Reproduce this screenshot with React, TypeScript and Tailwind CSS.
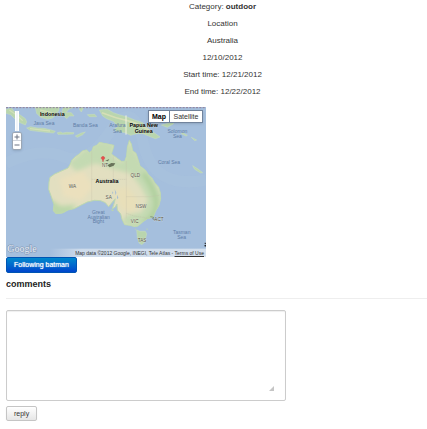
const details = [
  { label: "Category: ", value: "outdoor" },
  { label: "Location" },
  { label: "Australia" },
  { label: "12/10/2012" },
  { label: "Start time: 12/21/2012" },
  { label: "End time: 12/22/2012" },
];

const seas = [
  { x: 132, y: 74, text: "Java Sea" },
  { x: 256, y: 80, text: "Banda Sea" },
  { x: 352, y: 82, text: "Arafura" },
  { x: 352, y: 98, text: "Sea" },
  { x: 532, y: 100, text: "Solomon" },
  { x: 532, y: 115, text: "Sea" },
  { x: 507, y: 191, text: "Coral Sea" },
  { x: 295, y: 342, text: "Great" },
  { x: 296, y: 356, text: "Australian" },
  { x: 295, y: 370, text: "Bight" },
  { x: 545, y: 403, text: "Tasman" },
  { x: 545, y: 418, text: "Sea" },
];

const states = [
  { x: 217, y: 264, text: "WA" },
  { x: 315, y: 200, text: "NT" },
  { x: 406, y: 230, text: "QLD" },
  { x: 326, y: 297, text: "SA" },
  { x: 423, y: 324, text: "NSW" },
  { x: 404, y: 370, text: "VIC" },
  { x: 477, y: 364, text: "ACT" },
  { x: 426, y: 427, text: "TAS" },
];

const countries = [
  { x: 157, y: 47, text: "Indonesia" },
  { x: 431, y: 82, text: "Papua New" },
  { x: 431, y: 98, text: "Guinea" },
  { x: 321, y: 250, text: "Australia" },
];

const mainland =
  "M388 121 L394 132 398 152 408 160 414 178 420 198 436 210 446 225 456 234 464 248 476 262 481 278 482 296 477 316 467 333 459 352 442 356 428 366 414 378 404 380 390 376 374 374 366 358 362 342 352 330 351 312 345 322 337 326 343 308 346 296 334 310 326 320 316 308 302 302 284 301 262 306 242 316 222 326 204 330 188 339 168 341 160 332 162 314 154 290 146 268 147 246 150 232 164 222 182 214 204 204 211 192 216 180 226 170 238 162 248 152 260 150 268 158 276 152 280 140 290 136 298 127 312 130 328 133 342 136 338 150 334 162 348 172 364 184 374 184 380 168 382 142Z";

function MapDrawing() {
  return (
    <svg viewBox="18 21 600 450" className="block h-full w-full" role="img" aria-label="Map of Australia">
      <defs>
        <clipPath id="land">
          <path d={mainland} />
        </clipPath>
        <filter id="soft" x="-20%" y="-20%" width="140%" height="140%">
          <feGaussianBlur stdDeviation="7" />
        </filter>
        <linearGradient id="credit" x1="0" x2="1">
          <stop offset="0" stopColor="#e4ebf3" stopOpacity="0" />
          <stop offset="0.2" stopColor="#e4ebf3" stopOpacity="0.65" />
          <stop offset="1" stopColor="#e4ebf3" stopOpacity="0.75" />
        </linearGradient>
      </defs>
      <rect x="18" y="21" width="600" height="450" fill="#a5bfdd" />
      <path d="M18 190Q120 140 190 170T330 95T430 130T618 240" fill="none" stroke="#afc9e1" strokeWidth="34" opacity=".25" />

      <g fill="#b9d5ae" stroke="#c9dfbc" strokeWidth="1.5">
        <path d="M18 28L34 24 44 36 62 46 76 56 80 66 76 75 60 68 46 58 32 44 18 40Z" />
        <path d="M80 84L92 80 112 84 132 85 150 89 166 94 160 99 138 97 112 94 90 91Z" />
        <path d="M172 98L182 96 188 99 200 97 222 98 220 102 200 103 174 103Z" />
        <path d="M226 108L244 99 256 96 248 104 232 112Z" />
        <path d="M106 21L178 21 176 32 168 42 158 54 142 58 122 52 110 40Z" />
        <path d="M190 22L224 21 206 28 198 38 214 38 222 48 208 48 200 56 192 48 186 35Z" />
        <path d="M240 21L250 24 244 36 238 28ZM262 44L284 43 290 50 268 50Z" />
        <path d="M298 30L322 28 340 38 360 45 382 51 404 60 428 68 442 84 462 98 480 111 466 116 446 108 430 101 410 101 392 106 376 98 350 94 342 88 354 80 340 64 320 56 308 48Z" />
        <path d="M484 75L508 69 520 62 520 72 502 82ZM548 98L562 106 558 108 544 101ZM574 112L590 120 584 122Z" />
        <path d="M578 197L594 207 608 218 602 219 584 208Z" />
        <path d="M410 390L420 394 436 394 440 402 434 426 426 434 418 430 412 412Z" />
        <path d={mainland} fill="#e2dfc0" stroke="#bcd8af" strokeWidth="3" />
      </g>
      <path d="M306 38Q346 54 382 62T458 98" fill="none" stroke="#dde1b8" strokeWidth="5" opacity=".8" />
      <path d="M28 30Q52 45 68 62M120 30L155 38M90 86L150 93" fill="none" stroke="#dce2ba" strokeWidth="4" opacity=".7" />

      <g clipPath="url(#land)">
        <g filter="url(#soft)">
          <path d="M204 190L248 152 300 122 344 132 336 168 366 188 384 120 416 172 462 238 490 290 468 360 408 390 362 368 382 344 424 338 444 300 420 256 390 220 342 208 286 190 230 214Z" fill="#c4dab2" />
          <path d="M150 296L182 318 230 314 206 345 154 350Z" fill="#bcd7a9" />
          <path d="M430 220Q460 260 468 300T432 370" fill="none" stroke="#b0d09e" strokeWidth="16" />
          <path d="M178 236L250 214 280 260 244 302 190 288Z" fill="#ebe0bd" />
          <path d="M344 270L382 260 414 302 398 340 362 326Z" fill="#e8dfb9" />
        </g>
        <path d="M275 145V304M275 238H379M340 166V238M379 184V355M379 290H450L478 286M379 340L402 348 430 352 452 358" fill="none" stroke="#c3c1a9" strokeWidth="1.3" strokeDasharray="4 2" />
        <path d="M344 268l5 10-2 8zM352 284l3 10-4 3zM336 274l4 4-2 5z" fill="#9fbad7" />
      </g>
      <path d="M331 328l12 2-6 4zM405 385l4 4-3 2zM440 384l4 4-4 2z" fill="#b9d5ae" />
      <path d="M378 46V104" stroke="#eff1e2" strokeWidth="3" />
      <path d="M18 23H618" stroke="#907f99" strokeWidth="3" strokeDasharray="6 4" />
      <path d="M316 182l12-5-4 7zM322 196l12-7 12 1-5 7-12 5z" fill="#68735a" />
      <path d="M451 350l10 2-3 5 12 3" fill="none" stroke="#6c7568" strokeWidth="2" />
      <path d="M309 186L307 179Q302 176 304 172Q309 166 314 172Q316 176 311 179Z" fill="#e94d4b" stroke="#b94945" />

      <g textAnchor="middle" fontFamily="Liberation Sans, sans-serif">
        <g fontSize="15" fill="#5f7da6">
          {seas.map((label) => (
            <text key={`${label.x}-${label.y}`} x={label.x} y={label.y}>{label.text}</text>
          ))}
        </g>
        <g fontSize="14" fill="#55554d" stroke="#f1efdf" strokeOpacity=".6" strokeWidth="2" paintOrder="stroke">
          {states.map((label) => (
            <text key={label.text} x={label.x} y={label.y}>{label.text}</text>
          ))}
        </g>
        <g fontSize="16" fontWeight="700" fill="#000" stroke="#e6ecd8" strokeOpacity=".7" strokeWidth="2" paintOrder="stroke">
          {countries.map((label) => (
            <text key={label.text} x={label.x} y={label.y}>{label.text}</text>
          ))}
        </g>
      </g>

      <rect x="150" y="446" width="468" height="25" fill="url(#credit)" />
      <text x="22" y="456" fontSize="30" fontFamily="Liberation Serif, serif" fill="#e9eff6" stroke="#7f95b3" strokeWidth="3" paintOrder="stroke">Google</text>
      <path d="M614 430h4M618 434l-4 4h4" stroke="#222" strokeWidth="3" />
    </svg>
  );
}

function ZoomControl() {
  return (
    <div className="absolute top-1 left-1.5 flex w-2.5 flex-col items-center">
      <div className="mb-px h-5 w-1 border-x border-white bg-slate-100" />
      <div className="flex flex-col rounded-xs border border-[#9ba6b4] bg-white shadow-sm">
        <button type="button" aria-label="Zoom in" className="flex size-2 items-center justify-center border-b border-gray-300 text-gray-500">
          <svg viewBox="0 0 8 8" className="size-2"><path d="M1.5 4h5M4 1.5v5" stroke="currentColor" /></svg>
        </button>
        <button type="button" aria-label="Zoom out" className="flex size-2 items-center justify-center text-gray-500">
          <svg viewBox="0 0 8 8" className="size-2"><path d="M1.5 4h5" stroke="currentColor" /></svg>
        </button>
      </div>
    </div>
  );
}

export default function App() {
  return (
    <main className="bg-white pt-px pl-1.5 font-['Liberation_Sans',Arial,sans-serif] text-[8px] leading-3 text-[#333]">
      <section className="flex flex-col gap-[5px] pl-3 text-center">
        {details.map((item) => (
          <p key={item.label}>
            {item.label}
            {item.value && <strong>{item.value}</strong>}
          </p>
        ))}
      </section>

      <div className="relative mt-[9px] h-[150px] w-[200px] overflow-hidden">
        <MapDrawing />
        <ZoomControl />
        <div className="absolute top-[3px] right-[3px] flex h-[13px] border border-[#71839c] bg-white text-[7px] leading-[11px] text-black shadow-sm">
          <button type="button" className="w-[21px] border-r border-[#71839c] font-bold">Map</button>
          <button type="button" className="w-8 text-[#333]">Satellite</button>
        </div>
        <p className="absolute right-0.5 bottom-0 text-[5px] leading-2 whitespace-nowrap text-[#333]">
          Map data ©2012 Google, INEGI, Tele Atlas - <a href="#terms" className="underline">Terms of Use</a>
        </p>
      </div>

      <button
        type="button"
        className="block h-4 rounded-xs border border-[#0055b3] bg-linear-to-b from-[#0088cc] to-[#0044cc] px-[7px] text-[7px] leading-3 text-white [text-shadow:0_0_1px_#fff]"
      >
        Following batman
      </button>

      <h2 className="mt-[3px] text-[9px] leading-4 font-bold text-[#222]">
        <label htmlFor="comment">comments</label>
      </h2>
      <hr className="mt-1.5 border-[#eee]" />

      <form onSubmit={(event) => event.preventDefault()}>
        <div className="relative mt-[11px] w-[280px] max-w-full">
          <textarea
            id="comment"
            className="block h-[91px] w-full resize-none rounded-xs border border-[#ccc] bg-white p-1 shadow-[inset_0_1px_1px_#0001] outline-none"
          />
          <svg viewBox="0 0 5 5" className="pointer-events-none absolute right-3 bottom-2.5 size-[5px]" aria-hidden="true">
            <path d="M5 0V5H0Z" fill="#c5c5c5" />
          </svg>
        </div>
        <button
          type="submit"
          className="mt-[5px] block h-[15px] rounded-xs border border-[#c5c5c5] bg-linear-to-b from-white to-[#e6e6e6] px-[7px] text-[7px] leading-3 text-[#333] shadow-xs"
        >
          reply
        </button>
      </form>
    </main>
  );
}
